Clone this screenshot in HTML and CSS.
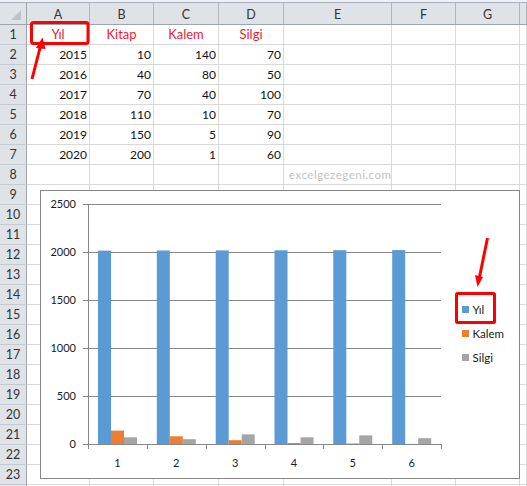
FILE: index.html
```html
<!doctype html>
<html>
<head>
<meta charset="utf-8">
<title>Grafik</title>
<link rel="stylesheet" href="styles.css">
</head>
<body>
<div class="topbar"></div>
<div class="sheet" id="sheet"></div>

<div class="chart">
	<svg width="478" height="287" viewBox="41 191 478 287">
		<g class="grid">
			<line x1="83" y1="204.5" x2="441" y2="204.5"/>
			<line x1="83" y1="252.5" x2="441" y2="252.5"/>
			<line x1="83" y1="300.5" x2="441" y2="300.5"/>
			<line x1="83" y1="348.5" x2="441" y2="348.5"/>
			<line x1="83" y1="396.5" x2="441" y2="396.5"/>
		</g>
		<g id="bars"></g>
		<g class="grid">
			<line x1="88.5" y1="204" x2="88.5" y2="444"/>
			<line x1="83" y1="444.5" x2="441" y2="444.5"/>
		</g>
		<g class="grid" id="ticks"></g>
		<g class="ylab">
			<text x="76" y="208">2500</text>
			<text x="76" y="256">2000</text>
			<text x="76" y="304">1500</text>
			<text x="76" y="352">1000</text>
			<text x="76" y="400">500</text>
			<text x="76" y="448">0</text>
		</g>
		<g class="xlab" id="xlab"></g>
		<g class="legend">
			<rect x="462" y="306" width="7" height="7" fill="#5b9bd5"/>
			<text x="472.5" y="314">Yıl</text>
			<rect x="462" y="330" width="7" height="7" fill="#ed7d31"/>
			<text x="472.5" y="338">Kalem</text>
			<rect x="462" y="354" width="7" height="7" fill="#a5a5a5"/>
			<text x="472.5" y="362">Silgi</text>
		</g>
	</svg>
</div>

<svg class="marks" width="527" height="486">
	<rect x="31.5" y="22.5" width="56.5" height="21" rx="2"/>
	<line x1="32" y1="79" x2="40.5" y2="46"/>
	<polygon points="36,48 45.5,49 42.5,37.5"/>
	<rect x="456.5" y="293.5" width="38" height="29" rx="1"/>
	<line x1="487.5" y1="238" x2="479.5" y2="277"/>
	<polygon points="475,275 483,277 477.5,287"/>
</svg>

<script>
var sheet=document.getElementById('sheet');
var cols=['','A','B','C','D','E','F','G',''];
var data=[
	['Yıl','Kitap','Kalem','Silgi'],
	[2015,10,140,70],
	[2016,40,80,50],
	[2017,70,40,100],
	[2018,110,10,70],
	[2019,150,5,90],
	[2020,200,1,60]
];
//başlık satırı
for(var i=0;i<cols.length;i++){
	var d=document.createElement('div');
	d.className=i==0?'head corner':'head';
	d.innerHTML=cols[i];
	sheet.appendChild(d);
}
//satırlar (24. satır sadece kenarda görünüyor)
for(var r=1;r<=24;r++){
	var d=document.createElement('div');
	d.className='rowhead';
	d.innerHTML=r<24?r:'';
	sheet.appendChild(d);
	for(var c=1;c<cols.length;c++){
		var cell=document.createElement('div');
		cell.className='cell';
		var row=data[r-1];
		if(row && c<=4){
			cell.innerHTML=row[c-1];
			cell.className+=r==1?' title':' num';
		}
		if(r==8 && c==5){
			cell.innerHTML='excelgezegeni.com';
			cell.className+=' mark';
		}
		sheet.appendChild(cell);
	}
}
//grafik
var ns='http://www.w3.org/2000/svg';
var bars=document.getElementById('bars');
var ticks=document.getElementById('ticks');
var xlab=document.getElementById('xlab');
var step=353/6;
var colors=['#5b9bd5','#ed7d31','#a5a5a5'];
for(var i=0;i<6;i++){
	var x0=88+i*step;
	var vals=[data[i+1][0],data[i+1][2],data[i+1][3]];
	for(var k=0;k<3;k++){
		var h=vals[k]*48/500;
		var rc=document.createElementNS(ns,'rect');
		rc.setAttribute('x',(x0+10+k*13).toFixed(1));
		rc.setAttribute('y',(444-h).toFixed(1));
		rc.setAttribute('width',13);
		rc.setAttribute('height',h.toFixed(1));
		rc.setAttribute('fill',colors[k]);
		bars.appendChild(rc);
	}
	var t=document.createElementNS(ns,'text');
	t.setAttribute('x',(x0+step/2).toFixed(1));
	t.setAttribute('y',467);
	t.textContent=i+1;
	xlab.appendChild(t);
}
for(var i=0;i<=6;i++){
	var x=Math.round(88+i*step)+0.5;
	var ln=document.createElementNS(ns,'line');
	ln.setAttribute('x1',x);ln.setAttribute('x2',x);
	ln.setAttribute('y1',444);ln.setAttribute('y2',449);
	ticks.appendChild(ln);
}
</script>
</body>
</html>
```

FILE: styles.css
```css
*{margin:0;padding:0;box-sizing:border-box}
body{background:#fff;overflow:hidden;width:527px;height:486px;font-family:Lato,"Liberation Sans",sans-serif;font-size:12px;color:#111}
.topbar{height:3px;background:#eef0f3;border-bottom:1px solid #a7b0bc}
.sheet{display:grid;grid-template-columns:27px 63px 64px 65px 65px 108px 64px 64px 1fr;grid-template-rows:22px;grid-auto-rows:20px}
.head{background:#dfe3e8;border-right:1px solid #b1b6bd;border-bottom:1px solid #9ea4ab;text-align:center;line-height:21px;padding-top:1px;color:#333;font-size:12.5px}
.corner{position:relative;border-right-color:#9ea4ab}
.corner::after{content:"";position:absolute;right:5px;bottom:4px;width:0;height:0;border-left:10px solid transparent;border-bottom:10px solid #bcc2c9}
.rowhead{background:#dfe3e8;border-right:1px solid #9ea4ab;border-bottom:1px solid #c5cad0;text-align:center;line-height:19px;color:#333;font-size:12.5px}
.cell{border-right:1px solid #d9d9d9;border-bottom:1px solid #d9d9d9;line-height:19px;padding:0 2px;white-space:nowrap;overflow:visible}
.cell.num{text-align:right}
.cell.title{text-align:center;color:#f0192f;font-size:13px}
.cell.mark{color:#c2c2c2;font-size:11.5px;letter-spacing:0.5px;padding-left:5px}
.chart{position:absolute;left:40px;top:190px;width:480px;height:289px;border:1px solid #878787;background:#fff}
.chart svg{display:block}
.chart .grid line{stroke:#878787;stroke-width:1}
.chart text{font-family:Lato,"Liberation Sans",sans-serif;font-size:11px;fill:#1a1a1a}
.chart .ylab text{text-anchor:end}
.chart .xlab text{text-anchor:middle}
.chart .legend text{font-size:11.5px}
.marks{position:absolute;left:0;top:0;pointer-events:none}
.marks rect{fill:none;stroke:#ff0000;stroke-width:3}
.marks line{stroke:#ff0000;stroke-width:3}
.marks polygon{fill:#ff0000}
```
